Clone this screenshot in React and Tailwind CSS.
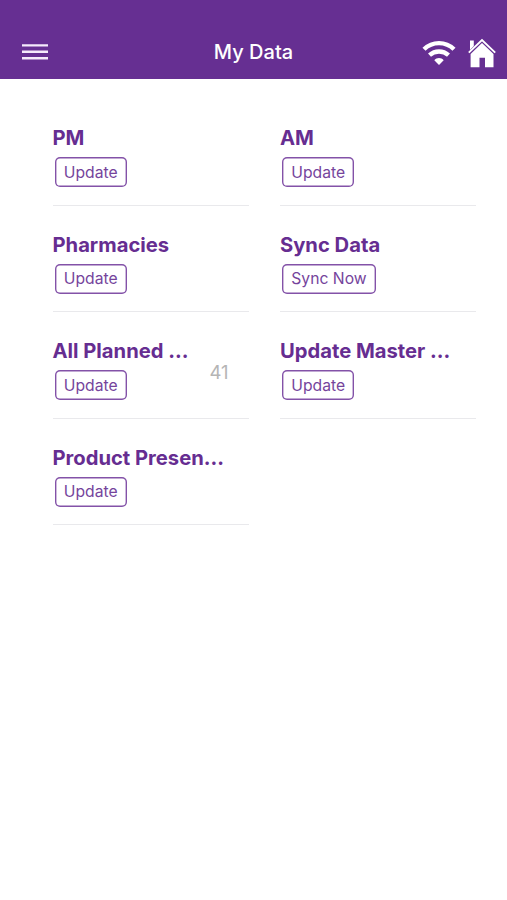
const items = [
  { title: "PM", action: "Update" },
  { title: "AM", action: "Update" },
  { title: "Pharmacies", action: "Update" },
  { title: "Sync Data", action: "Sync Now" },
  { title: "All Planned ...", action: "Update", count: 41 },
  { title: "Update Master ...", action: "Update" },
  { title: "Product Presen...", action: "Update" },
];

const MenuIcon = () => (
  <svg width="26" height="18" viewBox="0 0 26 18" stroke="#f5eafc" strokeWidth="2.4">
    <path d="M0 2.4H26M0 8.8H26M0 15.2H26" />
  </svg>
);

const WifiIcon = () => (
  <svg width="34" height="26" viewBox="0 0 34 26" fill="none" stroke="white">
    <path d="M2 9.3C10.4 1.1 23.6 1.1 32 9.3" strokeWidth="4.4" />
    <path d="M7.5 15.2C12.9 10.3 21.1 10.3 26.5 15.2" strokeWidth="4.4" />
    <path d="M12.3 20.3C14.6 17.2 19.4 17.2 21.7 20.3L17 25Z" fill="white" stroke="none" />
  </svg>
);

const HomeIcon = () => (
  <svg width="28" height="30" viewBox="0 0 28 30" fill="white">
    <path d="M2 2.5H5.8V8L2 12Z" />
    <path d="M.8 14.6L14 2L27.2 14.6" fill="none" stroke="white" strokeWidth="1.9" />
    <path d="M14 5L25.5 16V29.3H17V19.8H11.5V29.3H2.6V16Z" />
  </svg>
);

const DataItem = ({ title, action, count }) => (
  <article className="flex items-start justify-between border-b border-[#e9e9ec] pt-[25px]">
    <div className="flex flex-col items-start">
      <h2 className="h-7 text-[20.2px] leading-7 font-bold whitespace-nowrap">{title}</h2>
      <button className="mt-[5px] ml-[2px] h-[30px] rounded-[5px] px-[9.3px] pt-px text-[15.7px] leading-none text-[#75449c] ring-[1.4px] ring-[#8352a8] ring-inset">
        {action}
      </button>
    </div>
    {count && <span className="mt-[23px] mr-5 text-[18.5px] leading-6 text-[#b5b5b5]">{count}</span>}
  </article>
);

export default function App() {
  return (
    <main className="min-h-screen bg-white font-['Inter',sans-serif] text-[#662d91]">
      <header className="grid h-[79px] grid-cols-[1fr_auto_1fr] items-end bg-[#662f92] px-[11px] pb-[9px] text-white">
        <button className="ml-[11px] flex h-9 w-[26px] items-center" aria-label="Menu">
          <MenuIcon />
        </button>
        <h1 className="text-[20px] leading-9 font-medium">My Data</h1>
        <div className="flex items-center justify-end gap-3 pb-0.5">
          <WifiIcon />
          <HomeIcon />
        </div>
      </header>
      <section className="grid auto-rows-[106.6px] grid-cols-[196px_196px] gap-x-[31.5px] pt-5 pl-[52.5px]">
        {items.map((item) => (
          <DataItem key={item.title} {...item} />
        ))}
      </section>
    </main>
  );
}
